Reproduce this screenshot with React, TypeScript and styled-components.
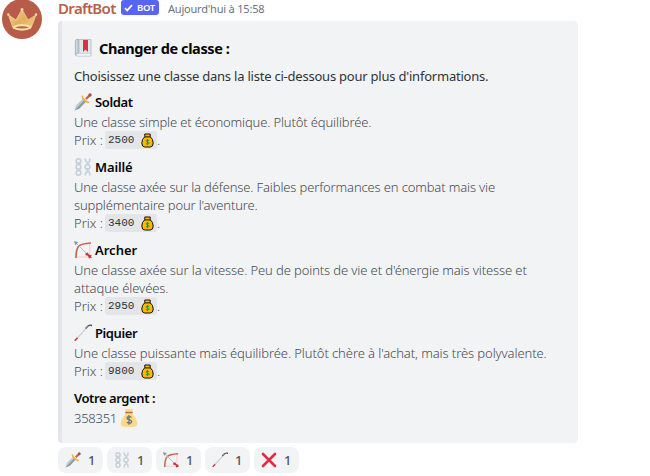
import React from "react";
import styled, { createGlobalStyle } from "styled-components";

const Global = createGlobalStyle`
  * { box-sizing: border-box; }
  body { margin: 0; background: #fff; overflow: hidden; }
`;

const Message = styled.main`
  display: flex;
  width: 650px;
  height: 476px;
  overflow: hidden;
  background: #fff;
  color: #464b53;
  font-family: "Noto Sans", "Open Sans", sans-serif;
  font-size: 13px;
  line-height: 18px;
`;

const AvatarColumn = styled.div`
  flex: 0 0 58px;
  padding-left: 2px;
  svg { display: block; margin-top: -1px; }
`;

const Body = styled.div`
  flex: 1;
  min-width: 0;
`;

const Header = styled.header`
  display: flex;
  align-items: flex-start;
  height: 21px;
`;

const Author = styled.span`
  width: 62px;
  color: #b5614c;
  font-size: 15px;
  font-weight: 600;
  letter-spacing: -0.65px;
  line-height: 16px;
  white-space: nowrap;
`;

const Badge = styled.span`
  display: flex;
  align-items: center;
  gap: 4px;
  width: 38px;
  height: 15px;
  margin-left: 1px;
  padding-left: 3px;
  border-radius: 3px;
  background: #5865f2;
  color: #fff;
  font-size: 9.5px;
  font-weight: 600;
  letter-spacing: -0.3px;
  line-height: 15px;
`;

const Time = styled.time`
  margin-left: 9px;
  color: #6a7480;
  font-size: 11px;
  letter-spacing: -0.2px;
  line-height: 18px;
  white-space: nowrap;
`;

const Embed = styled.article`
  width: 520px;
  height: 422px;
  padding: 16px 12px;
  border-left: 4px solid #e3e5e8;
  border-radius: 4px;
  background: #f2f3f5;
`;

const Title = styled.h1`
  display: flex;
  align-items: center;
  gap: 6px;
  height: 22px;
  margin: 0 0 8px;
  color: #060607;
  font-size: 14.5px;
  font-weight: 700;
  letter-spacing: -0.4px;
`;

const Line = styled.p<{ $track?: number; $dark?: boolean }>`
  height: 18px;
  margin: 0;
  color: ${(p) => (p.$dark ? "#2e3338" : "#464b53")};
  font-weight: ${(p) => (p.$dark ? 400 : 300)};
  letter-spacing: ${(p) => p.$track ?? 0}px;
  white-space: nowrap;
`;

const Field = styled.section`
  margin-top: 9px;
  ${Line} + & { margin-top: 8px; }
`;

const FieldName = styled.h2<{ $track?: number }>`
  display: flex;
  align-items: center;
  gap: 3px;
  height: 18px;
  margin: 0 0 2px;
  color: #060607;
  font-size: 13px;
  font-weight: 600;
  letter-spacing: ${(p) => p.$track ?? 0}px;
`;

const PriceRow = styled.div`
  display: flex;
  align-items: center;
  height: 18px;
  font-weight: 300;
`;

const PriceLabel = styled.span`
  width: 31px;
  white-space: nowrap;
`;

const Chip = styled.code`
  display: flex;
  align-items: center;
  justify-content: space-between;
  width: 52px;
  height: 18px;
  padding: 0 3px;
  border-radius: 3px;
  background: #e3e5e8;
  color: #2e3338;
  font: 400 11px/18px "Liberation Mono", monospace;
`;

const Balance = styled.div`
  display: flex;
  align-items: center;
  gap: 3px;
  height: 18px;
  font-weight: 300;
  letter-spacing: -0.25px;
`;

const Reactions = styled.div`
  display: flex;
  gap: 4px;
  margin-top: 4px;
`;

const Reaction = styled.button`
  display: flex;
  align-items: center;
  gap: 7px;
  width: 45px;
  height: 26px;
  padding: 0 0 0 7px;
  border: 0;
  border-radius: 8px;
  background: #f2f3f5;
  color: #4f5660;
  font: 500 13px/18px "Noto Sans", sans-serif;
`;

type IconProps = { size?: number };

const Crown = () => (
  <svg width="40" height="40" viewBox="0 0 40 40">
    <defs>
      <linearGradient id="gold" x1="0" y1="0" x2="1" y2="1">
        <stop offset="0" stopColor="#f6dda0" />
        <stop offset=".5" stopColor="#e2ae5c" />
        <stop offset="1" stopColor="#f4d38c" />
      </linearGradient>
    </defs>
    <circle cx="20" cy="20" r="20" fill="#b85c49" />
    <path d="M6.500 16l7.500 5 6-10.500L26 21l8-5-5 13q-9 4-18 0z" fill="url(#gold)" stroke="#f5dda2" strokeWidth=".7" strokeLinejoin="round" />
    <path d="M11 27q9-4 18 0v2.500q-9 4-18 0z" fill="#f5dfa6" />
    <path d="M13 28.500q7-2.400 14 0-7 2-14 0z" fill="#b9643f" />
    <circle cx="6.300" cy="15.500" r="1.200" fill="#f4dba0" />
    <circle cx="20" cy="10.500" r="1.500" fill="#f4dba0" />
    <circle cx="34" cy="15.500" r="1.200" fill="#f4dba0" />
  </svg>
);

const Check = () => (
  <svg width="9" height="8" viewBox="0 0 9 8">
    <path d="M1 4.200l2.200 2.200L8 1.200" fill="none" stroke="#fff" strokeWidth="1.700" />
  </svg>
);

const Book = () => (
  <svg width="19" height="20" viewBox="0 0 19 20">
    <path d="M3.500 1h13q1 0 1 1v15.500q0 1-1 1H4q-3 0-3-2.500V3.500Q1 1 3.500 1z" fill="#b7c5ce" />
    <path d="M3 15.800h13.500v2H4q-1.500 0-1.500-1z" fill="#f4f7f9" />
    <path d="M5.500 2h11v13.300h-11z" fill="#dfe6eb" />
    <path d="M1.300 3.500q0-2 2.700-2.300v14q-2 0-2.700 1.500z" fill="#d0dae0" stroke="#93a5b1" strokeWidth=".6" />
    <path d="M9 2h5v12l-2.500-2.500L9 14z" fill="#dd2e44" />
  </svg>
);

const Dagger = ({ size = 18 }: IconProps) => (
  <svg width={size} height={size} viewBox="0 0 18 18">
    <path d="M.5 17.500l1.700-5.300L9.500 5l3 3-7.200 7.500z" fill="#bccad3" />
    <path d="M.5 17.500L11 6.500 12.500 8l-7.200 7.500z" fill="#8699a5" />
    <path d="M12 6l3.500-3.500" stroke="#bf6952" strokeWidth="2.400" />
    <path d="M8.300 3.300q.2 2 2.200 3.900 2 2 4.300 2.300" fill="none" stroke="#ffac33" strokeWidth="1.700" strokeLinecap="round" />
    <circle cx="16" cy="2" r="1.700" fill="#a6513d" />
  </svg>
);

const Chains = ({ size = 18 }: IconProps) => (
  <svg width={size} height={size} viewBox="0 0 18 18" fill="none" stroke="#c3d0d8" strokeWidth="1.600">
    <ellipse cx="4.500" cy="3.300" rx="2.300" ry="2.500" />
    <ellipse cx="4.500" cy="9" rx="2.300" ry="2.500" />
    <ellipse cx="4.500" cy="14.700" rx="2.300" ry="2.500" />
    <path d="M4.500 4v3M4.500 10.500v3M13.500 4.500v3M13.500 10v3M11.200.5q0 3 2.300 4t2.300-4M13.500 6q-2.500 1-2.500 3t2.500 3q2.500-1 2.500-3t-2.500-3zM11.200 17.500q0-3 2.300-4t2.300 4" />
  </svg>
);

const Bow = ({ size = 18 }: IconProps) => (
  <svg width={size} height={size} viewBox="0 0 18 18">
    <path d="M2.500 16h13.200V2.500" fill="none" stroke="#f0c5b9" strokeWidth=".8" />
    <path d="M2 17q0-8.500 2.500-11.500T17 2" fill="none" stroke="#c1694f" strokeWidth="1.700" />
    <path d="M2 2l13 13" stroke="#aebbc4" strokeWidth="1" />
    <path d="M0 0l4.300 1.300-3 3z" fill="#8296a2" />
    <path d="M11.500 12.500l2.300-1 1 2 3 1-.8 1.200 1 1.300-2-.2-1 .9-1-3-2.500-.4z" fill="#d0313f" />
  </svg>
);

const Lance = ({ size = 18 }: IconProps) => (
  <svg width={size} height={size} viewBox="0 0 18 18" fill="none">
    <path d="M1 16.500L13 3.700" stroke="#c5ced4" strokeWidth="1.200" />
    <path d="M.8 16.700l2.700-2.900" stroke="#dd2e44" strokeWidth="1.500" />
    <path d="M11.500 4.500L14 2q1.500-1 3.500-.8v1" stroke="#444a50" strokeWidth="1.200" />
    <path d="M12 4l2.500-2" stroke="#7d8a93" strokeWidth="1.500" />
  </svg>
);

const Cross = ({ size = 16 }: IconProps) => (
  <svg width={size} height={size} viewBox="0 0 16 16">
    <path d="M2 2l12 12M14 2L2 14" stroke="#dd2e44" strokeWidth="2.600" strokeLinecap="round" />
  </svg>
);

const Coins = () => (
  <svg width="13" height="15" viewBox="0 0 13 15">
    <path d="M3.800 1h5.400v2.700q3 2.300 3 6.300 0 4-3 4H3.800q-3 0-3-4 0-4 3-6.300z" fill="#ffb900" stroke="#111" strokeWidth="1" />
    <path d="M3.500 3.900h6" stroke="#111" strokeWidth="1" />
    <path d="M8.200 7.400q-3.300-1-3.300.5c0 1.300 3.400.8 3.400 2.200q0 1.500-3.500.6M6.500 6v6.100" fill="none" stroke="#2a9a35" strokeWidth="1" />
  </svg>
);

const Bag = () => (
  <svg width="18" height="18" viewBox="0 0 18 18">
    <path d="M6 4h6l4 6q4 8-4 8H6q-8 0-4-8z" fill="#fdd888" />
    <path d="M5 0h8l-1.300 4H6.300z" fill="#fdd888" />
    <path d="M5.700 3.500h6.600" stroke="#bf6952" strokeWidth="1.300" strokeLinecap="round" />
    <path d="M11.500 8.300Q9 7 7.300 8q-1 1.800 1.700 2.600 3.800 1 2.200 3-1.800 1-4.400-.2M9 6v9.700" fill="none" stroke="#67757f" strokeWidth="1.300" />
  </svg>
);

type ClassInfo = {
  name: string;
  track: number;
  price: string;
  Icon: React.FC<IconProps>;
  lines: { text: string; track: number }[];
};

const classes: ClassInfo[] = [
  {
    name: "Soldat", track: -0.35, price: "2500", Icon: Dagger,
    lines: [{ text: "Une classe simple et économique. Plutôt équilibrée.", track: -0.14 }],
  },
  {
    name: "Maillé", track: -0.15, price: "3400", Icon: Chains,
    lines: [
      { text: "Une classe axée sur la défense. Faibles performances en combat mais vie", track: -0.14 },
      { text: "supplémentaire pour l'aventure.", track: -0.15 },
    ],
  },
  {
    name: "Archer", track: 0, price: "2950", Icon: Bow,
    lines: [
      { text: "Une classe axée sur la vitesse. Peu de points de vie et d'énergie mais vitesse et", track: -0.11 },
      { text: "attaque élevées.", track: -0.08 },
    ],
  },
  {
    name: "Piquier", track: -0.4, price: "9800", Icon: Lance,
    lines: [{ text: "Une classe puissante mais équilibrée. Plutôt chère à l'achat, mais très polyvalente.", track: -0.085 }],
  },
];

const reactions: React.FC<IconProps>[] = [Dagger, Chains, Bow, Lance, Cross];

export default function App() {
  return (
    <>
      <Global />
      <Message>
        <AvatarColumn><Crown /></AvatarColumn>
        <Body>
          <Header>
            <Author>DraftBot</Author>
            <Badge><Check />BOT</Badge>
            <Time>Aujourd'hui à 15:58</Time>
          </Header>
          <Embed>
            <Title><Book />Changer de classe :</Title>
            <Line $dark $track={-0.22}>Choisissez une classe dans la liste ci-dessous pour plus d'informations.</Line>
            {classes.map(({ name, track, price, Icon, lines }) => (
              <Field key={name}>
                <FieldName $track={track}><Icon />{name}</FieldName>
                {lines.map((l) => <Line key={l.text} $track={l.track}>{l.text}</Line>)}
                <PriceRow>
                  <PriceLabel>Prix :</PriceLabel>
                  <Chip>{price}<Coins /></Chip>.
                </PriceRow>
              </Field>
            ))}
            <Field>
              <FieldName $track={-0.42}>Votre argent :</FieldName>
              <Balance>358351 <Bag /></Balance>
            </Field>
          </Embed>
          <Reactions>
            {reactions.map((Icon, i) => <Reaction key={i}><Icon size={16} />1</Reaction>)}
          </Reactions>
        </Body>
      </Message>
    </>
  );
}
